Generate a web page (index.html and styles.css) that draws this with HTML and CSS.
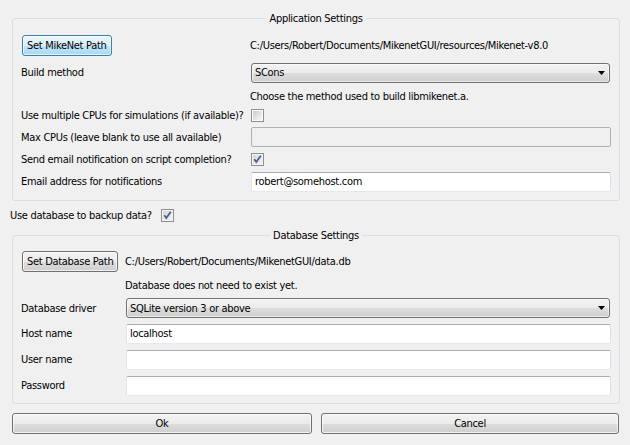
FILE: index.html
```html
<!DOCTYPE html>
<html>
<head>
<meta charset="utf-8">
<link rel="stylesheet" href="styles.css">
</head>
<body>
<div class="dialog">
  <fieldset class="group">
    <legend align="center">Application Settings</legend>
    <div class="grid app-grid">
      <div class="cell"><button class="btn btn-focus">Set MikeNet Path</button></div>
      <div class="cell text">C:/Users/Robert/Documents/MikenetGUI/resources/Mikenet-v8.0</div>

      <div class="cell">Build method</div>
      <div class="cell"><div class="combo"><span>SCons</span><svg class="arrow" width="7" height="4" viewBox="0 0 7 4"><polygon points="0,0 7,0 3.5,4" fill="#000"/></svg></div></div>

      <div class="cell"></div>
      <div class="cell text">Choose the method used to build libmikenet.a.</div>

      <div class="cell">Use multiple CPUs for simulations (if available)?</div>
      <div class="cell"><span class="cb"><svg width="13" height="13" viewBox="0 0 13 13"><defs><linearGradient id="g1" x1="0" y1="0" x2="1" y2="1"><stop offset="0" stop-color="#c9cdd3"/><stop offset="1" stop-color="#f7f7f7"/></linearGradient></defs><rect x="0.5" y="0.5" width="12" height="12" fill="#fff" stroke="#8f8f8f"/><rect x="2" y="2" width="9" height="9" fill="url(#g1)"/></svg></span></div>

      <div class="cell">Max CPUs (leave blank to use all available)</div>
      <div class="cell"><div class="input disabled"></div></div>

      <div class="cell">Send email notification on script completion?</div>
      <div class="cell"><span class="cb"><svg width="13" height="13" viewBox="0 0 13 13"><defs><linearGradient id="g2" x1="0" y1="0" x2="1" y2="1"><stop offset="0" stop-color="#d4d6da"/><stop offset="1" stop-color="#f2f2f2"/></linearGradient></defs><rect x="0.5" y="0.5" width="12" height="12" fill="#f4f4f4" stroke="#8f8f8f"/><rect x="2" y="2" width="9" height="9" fill="url(#g2)"/><polyline points="3.3,6.2 5.3,9 9.8,2.8" fill="none" stroke="#4a5f97" stroke-width="1.8"/></svg></span></div>

      <div class="cell">Email address for notifications</div>
      <div class="cell"><div class="input">robert@somehost.com</div></div>
    </div>
  </fieldset>

  <div class="db-toggle">
    <span>Use database to backup data?</span>
    <span class="cb"><svg width="13" height="13" viewBox="0 0 13 13"><defs><linearGradient id="g3" x1="0" y1="0" x2="1" y2="1"><stop offset="0" stop-color="#d4d6da"/><stop offset="1" stop-color="#f2f2f2"/></linearGradient></defs><rect x="0.5" y="0.5" width="12" height="12" fill="#f4f4f4" stroke="#8f8f8f"/><rect x="2" y="2" width="9" height="9" fill="url(#g3)"/><polyline points="3.3,6.2 5.3,9 9.8,2.8" fill="none" stroke="#4a5f97" stroke-width="1.8"/></svg></span>
  </div>

  <fieldset class="group db-group">
    <legend align="center">Database Settings</legend>
    <div class="grid db-grid">
      <div class="cell"><button class="btn">Set Database Path</button></div>
      <div class="cell text">C:/Users/Robert/Documents/MikenetGUI/data.db</div>

      <div class="cell"></div>
      <div class="cell text">Database does not need to exist yet.</div>

      <div class="cell">Database driver</div>
      <div class="cell"><div class="combo"><span>SQLite version 3 or above</span><svg class="arrow" width="7" height="4" viewBox="0 0 7 4"><polygon points="0,0 7,0 3.5,4" fill="#000"/></svg></div></div>

      <div class="cell">Host name</div>
      <div class="cell"><div class="input">localhost</div></div>

      <div class="cell">User name</div>
      <div class="cell"><div class="input"></div></div>

      <div class="cell">Password</div>
      <div class="cell"><div class="input"></div></div>
    </div>
  </fieldset>

  <div class="actions">
    <button class="btn wide">Ok</button>
    <button class="btn wide">Cancel</button>
  </div>
</div>
</body>
</html>
```
FILE: styles.css
```css
* { box-sizing: border-box; }
html, body { margin: 0; padding: 0; }
body {
  background: #f0f0f0;
  color: #000;
  font-family: "DejaVu Sans Condensed", "DejaVu Sans", sans-serif;
  font-stretch: condensed;
  font-size: 11px;
  letter-spacing: -0.3px;
  line-height: 13px;
  width: 630px;
  height: 445px;
  overflow: hidden;
}
.dialog {
  padding: 12px 10px 0 12px;
}
.group {
  margin: 0;
  border: 1px solid #d5dfe5;
  border-radius: 3px;
  padding: 7px 8px 6px 8px;
  min-inline-size: 0;
}
.db-group {
  padding-bottom: 4px;
}
.group legend {
  margin: 0 auto;
  padding: 0 3px;
  line-height: 13px;
  height: 13px;
}
.grid {
  display: grid;
  align-items: center;
}
.app-grid {
  grid-template-columns: 229px 1fr;
  grid-template-rows: 26px 29px 18px 20px 24px 20px 25px;
}
.db-grid {
  grid-template-columns: 104px 1fr;
  grid-template-rows: 25px 22px 24px 27px 25px 27px;
}
.cell {
  display: flex;
  align-items: center;
  white-space: nowrap;
}
.btn {
  font: inherit;
  font-stretch: condensed;
  letter-spacing: -0.3px;
  color: #000;
  height: 21px;
  padding: 0 4px;
  margin-left: 1px;
  border: 1px solid #707070;
  border-radius: 3px;
  background: linear-gradient(to bottom, #f2f2f2 0%, #ebebeb 50%, #dddddd 51%, #cfcfcf 100%);
  box-shadow: inset 0 0 0 1px rgba(255,255,255,0.7);
  line-height: 17px;
}
.btn-focus {
  border-color: #3c7fb1;
  background: linear-gradient(to bottom, #eaf6fd 0%, #d9f0fc 50%, #bee6fd 51%, #a7d9f5 100%);
}
.btn.wide {
  margin: 0;
  width: 100%;
}
.combo {
  flex: 1;
  height: 20px;
  margin-left: 1px;
  margin-right: 1px;
  border: 1px solid #707070;
  border-radius: 3px;
  background: linear-gradient(to bottom, #f2f2f2 0%, #ebebeb 50%, #dddddd 51%, #cfcfcf 100%);
  box-shadow: inset 0 0 0 1px rgba(255,255,255,0.6);
  display: flex;
  align-items: center;
  justify-content: space-between;
  padding: 0 4px 0 3px;
}
.arrow { display: block; }
.input {
  flex: 1;
  height: 20px;
  margin-left: 1px;
  border: 1px solid #e3e9ef;
  border-top-color: #abadb3;
  border-left-color: #e2e3ea;
  border-right-color: #dbdfe6;
  border-radius: 2px;
  background: #fff;
  padding: 0 3px;
  display: flex;
  align-items: center;
}
.input.disabled {
  background: #f0f0f0;
  border-color: #adb2b5;
}
.cb {
  display: inline-flex;
  width: 13px;
  height: 13px;
  margin-left: 1px;
}
.cb svg { display: block; }
.db-toggle {
  height: 28px;
  display: flex;
  align-items: center;
  gap: 8px;
  margin-left: -2px;
}
.actions {
  margin-top: 9px;
  display: grid;
  grid-template-columns: 300px 298px;
  column-gap: 9px;
}
```
